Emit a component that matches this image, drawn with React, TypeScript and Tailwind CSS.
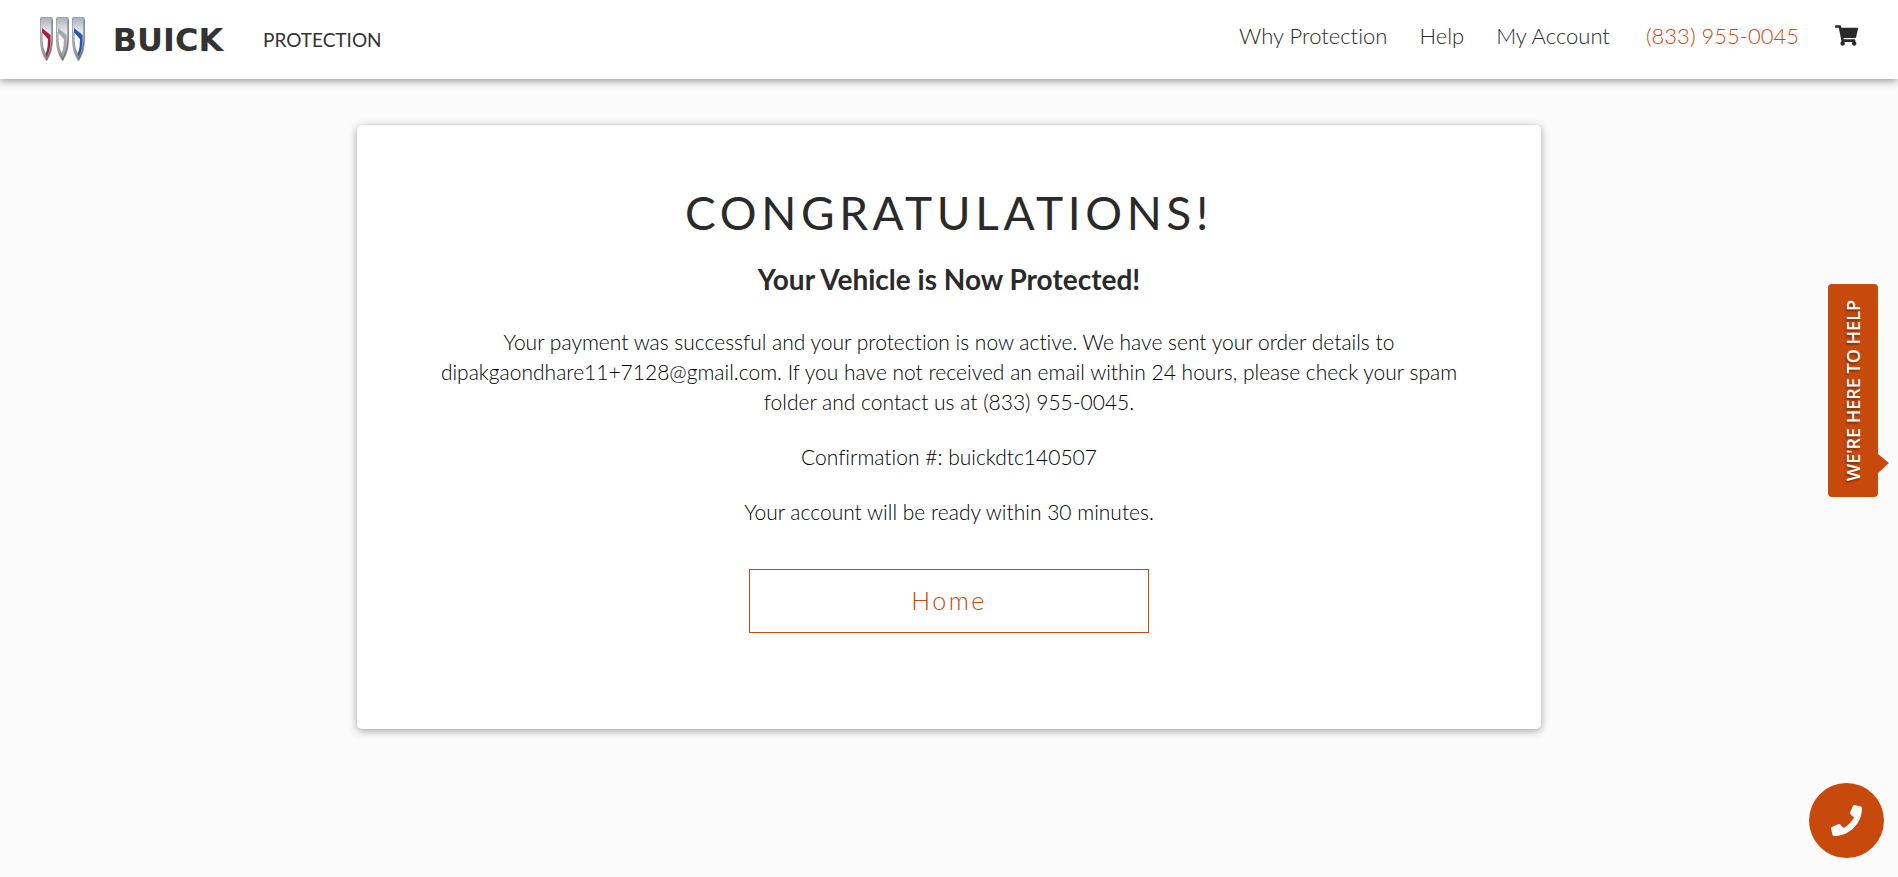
import { FaPhone, FaShoppingCart } from "react-icons/fa";

type ShieldProps = { x: number; stripe: string };

function Shield({ x, stripe }: ShieldProps) {
  return (
    <g transform={`translate(${x} 0)`}>
      <path d="M1 .5H11Q12.5 .5 12.5 2.5V23Q12.5 35 6.5 44Q.5 35 .5 23V2Q.5 .5 1 .5Z" fill="url(#chrome)" stroke="#94969c" strokeWidth=".8" />
      <path d="M2 2H11V17L2 10Z" fill="url(#sheen)" />
      <path d="M2 15L8.5 22Q9 30 6 38Q2 31 2 23Z" fill="#fff" stroke="#777a80" strokeWidth=".8" />
      <path d="M2 11L10.5 18V24Q10.3 33 6.5 40L6 37Q8.5 30 8 22L2 15Z" fill={stripe} />
      <path d="M12 3V23Q12 34 6.5 43" fill="none" stroke="#6f7278" strokeWidth="1" />
    </g>
  );
}

function Logo() {
  return (
    <a href="#" className="flex items-center" aria-label="Buick Protection">
      <svg width="45" height="45" viewBox="0 0 45 45" aria-hidden="true">
        <defs>
          <linearGradient id="chrome" x1="0" x2="0" y1="0" y2="1">
            <stop offset="0" stopColor="#a9acb3" />
            <stop offset=".3" stopColor="#e6e8f0" />
            <stop offset=".6" stopColor="#b9bbc2" />
            <stop offset="1" stopColor="#77797f" />
          </linearGradient>
          <linearGradient id="sheen" x1="0" x2="0" y1="0" y2="1">
            <stop offset="0" stopColor="#b4b6bd" />
            <stop offset="1" stopColor="#eef0fa" />
          </linearGradient>
        </defs>
        <Shield x={0} stripe="#ab1e3c" />
        <Shield x={16} stripe="#a5a5ad" />
        <Shield x={32} stripe="#2457ad" />
      </svg>
      <span className="ml-3 w-[142px] text-center font-['DejaVu_Sans',sans-serif] text-[32px] leading-8 font-bold text-[#333]">
        BUICK
      </span>
      <span className="ml-6 text-[19px] leading-8 text-[#333]">PROTECTION</span>
    </a>
  );
}

export default function App() {
  return (
    <div className="flex min-h-screen flex-col bg-[#fbfbfb] font-['Lato','Liberation_Sans',sans-serif] text-[#2a2a2a] [font-variant-ligatures:none]">
      <header className="relative flex h-[79px] items-center justify-between bg-white px-10 shadow-[0_2px_8px_rgba(0,0,0,0.4)]">
        <Logo />
        <nav className="mb-2 flex items-center text-[22px] leading-8 font-light">
          <a href="#">Why Protection</a>
          <a href="#" className="ml-8">Help</a>
          <a href="#" className="ml-8">My Account</a>
          <a href="tel:8339550045" className="ml-9 text-[#c8490c]">(833) 955-0045</a>
          <a href="#" aria-label="Cart" className="ml-9">
            <FaShoppingCart size={23} />
          </a>
        </nav>
      </header>

      <main className="px-6 py-[46px]">
        <section className="mx-auto flex w-full max-w-[1184px] flex-col items-center rounded-[5px] bg-white px-16 pt-14 pb-24 text-center shadow-[0_2px_8px_rgba(0,0,0,0.35)]">
          <h1 className="text-[46px] leading-16 font-normal tracking-widest">CONGRATULATIONS!</h1>
          <h2 className="mt-4 text-[28px] leading-9 font-bold">Your Vehicle is Now Protected!</h2>
          <div className="mt-[30px] flex flex-col gap-[25px] text-[21px] leading-[30px] font-light text-black">
            <p>
              Your payment was successful and your protection is now active. We have sent your order details to
              dipakgaondhare11+7128@gmail.com. If you have not received an email within 24 hours, please check your
              spam folder and contact us at (833) 955-0045.
            </p>
            <p>Confirmation #: buickdtc140507</p>
            <p>Your account will be ready within 30 minutes.</p>
          </div>
          <button type="button" className="mt-[42px] h-16 w-full max-w-[400px] border border-[#c8490c] text-[25px] font-light tracking-widest text-[#c8490c]">
            Home
          </button>
        </section>
      </main>

      <button type="button" className="fixed top-[284px] right-5 flex h-[213px] w-[50px] items-center justify-center rounded bg-[#c8490c] text-white">
        <span className="rotate-180 font-['Open_Sans',sans-serif] text-[18px] leading-6 font-semibold whitespace-nowrap [text-shadow:-2px_-1px_2px_rgba(0,0,0,0.35)] [writing-mode:vertical-rl]">
          WE'RE HERE TO HELP
        </span>
        <svg className="absolute bottom-6 left-full" width="11" height="19" viewBox="0 0 11 19" aria-hidden="true">
          <path d="M0 0L11 9L0 19Z" fill="#c8490c" />
        </svg>
      </button>

      <a href="tel:8339550045" aria-label="Call us" className="fixed right-[14px] bottom-[19px] flex size-[75px] items-center justify-center rounded-full bg-[#c8490c] text-white">
        <FaPhone size={31} />
      </a>
    </div>
  );
}
